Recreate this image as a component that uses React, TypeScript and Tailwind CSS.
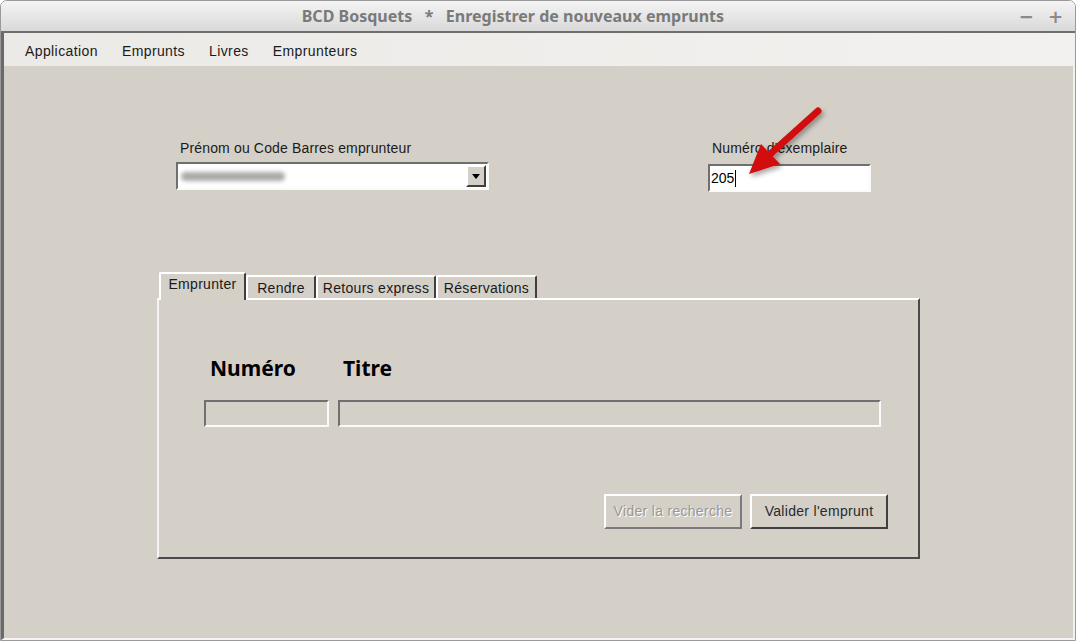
const sunken =
  "border-2 border-t-[#6f6f6f] border-l-[#6f6f6f] border-b-[#fafafa] border-r-[#fafafa]";
const raised =
  "border-2 border-t-white border-l-white border-b-[#3f3f3f] border-r-[#3f3f3f]";

const tabs = [
  { label: "Emprunter", w: "w-[87px]" },
  { label: "Rendre", w: "w-[70px]" },
  { label: "Retours express", w: "w-[120px]" },
  { label: "Réservations", w: "w-[101px]" },
];

export default function App() {
  const active = 0;

  return (
    <div className="w-[1076px] h-[641px] bg-white font-['Liberation_Sans',sans-serif] text-[#1a1a1a] overflow-hidden">
      <div className="relative w-full h-full flex flex-col rounded-t-[7px] overflow-hidden border border-[#9a9a9a]">
        {/* Title bar */}
        <div className="h-[32px] flex items-center bg-gradient-to-b from-[#f4f4f4] to-[#d9d9d9] border-b-2 border-[#6e6e6e] shrink-0">
          <div className="flex-1 text-center font-['Noto_Sans',sans-serif] font-bold text-[16px] text-[#7a7a7a] pl-[6px] whitespace-pre">
            BCD Bosquets   *   Enregistrer de nouveaux emprunts
          </div>
          <div className="flex items-center gap-[14px] pr-[12px] text-[#8a8a8a] font-['DejaVu_Sans',sans-serif] text-[18px] font-bold">
            <span>−</span>
            <span>+</span>
          </div>
        </div>

        <div className="flex-1 flex flex-col border-l-[3px] border-l-[#6a6a6a] border-r-2 border-r-[#f0f0f0] border-b-2 border-b-[#f4f4f4]">
          {/* Menu bar */}
          <div className="h-[33px] flex items-center gap-[24px] pl-[21px] pt-[3px] bg-gradient-to-r from-[#eceae7] to-[#f2f1ef] text-[14px] tracking-[0.4px]">
            <span>Application</span>
            <span>Emprunts</span>
            <span>Livres</span>
            <span>Emprunteurs</span>
          </div>

          {/* Body */}
          <div className="relative flex-1 bg-[#d4d0c8] pt-[74px]">
            <div className="flex items-start pl-[172px]">
              <div className="w-[313px] flex flex-col gap-[6px]">
                <span className="text-[14px] tracking-[0.15px] pl-[4px] leading-[16px]">Prénom ou Code Barres emprunteur</span>
                <div className={`h-[28px] bg-white flex items-center ${sunken}`}>
                  <div className="flex-1 pl-[2px]">
                    <div className="w-[104px] h-[9px] ml-[1px] rounded-full bg-[#a9a9a9] blur-[2px]" />
                  </div>
                  <div className={`w-[20px] h-[22px] mr-[1px] bg-[#d4d0c8] flex items-center justify-center ${raised}`}>
                    <svg width="8" height="5" viewBox="0 0 8 5">
                      <path d="M0 0 H8 L4 5 Z" fill="#000" />
                    </svg>
                  </div>
                </div>
              </div>
              <div className="ml-[219px] w-[163px] flex flex-col gap-[7px]">
                <span className="text-[14px] tracking-[0.15px] pl-[4px] leading-[17px]">Numéro d'exemplaire</span>
                <div className={`h-[28px] bg-white flex items-center ${sunken}`}>
                  <span className="text-[14px] pl-[1px] text-black">205</span>
                  <span className="w-[1px] h-[17px] bg-black ml-[1px]" />
                </div>
              </div>
            </div>

            {/* Tabs */}
            <div className="ml-[153px] mt-[79px] w-[763px]">
              <div className="flex items-end h-[27px] pl-[2px]">
                {tabs.map((t, i) => (
                  <div
                    key={t.label}
                    className={`${t.w} text-[14px] tracking-[0.3px] flex items-center justify-center border-l-2 border-t-2 border-r-2 border-l-white border-t-white border-r-[#3f3f3f] rounded-t-[2px] ${
                      i === active
                        ? "h-[28px] pb-[6px] relative z-10 -mb-[2px] bg-[#d4d0c8]"
                        : "h-[23px] pt-[1px]"
                    }`}
                  >
                    {t.label}
                  </div>
                ))}
              </div>
              <div className="h-[261px] flex flex-col pl-[45px] pr-[30px] pt-[55px] border-2 border-t-white border-l-[#f4f4f4] border-b-[#4a4a4a] border-r-[#4a4a4a]">
                <div className="flex font-['Noto_Sans',sans-serif] font-bold text-[21px] text-black leading-[26px]">
                  <span className="w-[139px] pl-[6px]">Numéro</span>
                  <span>Titre</span>
                </div>
                <div className="flex gap-[9px] mt-[19px] pr-[7px]">
                  <div className={`w-[125px] h-[27px] ${sunken}`} />
                  <div className={`flex-1 h-[27px] ${sunken}`} />
                </div>
                <div className="flex justify-end gap-[8px] mt-[67px]">
                  <div className={`w-[138px] h-[35px] flex items-center justify-center text-[14px] tracking-[0.3px] text-[#9a9893] [text-shadow:1px_1px_0_#fff] ${raised} border-b-[#7a7a7a] border-r-[#7a7a7a]`}>
                    Vider la recherche
                  </div>
                  <div className={`w-[138px] h-[35px] flex items-center justify-center text-[14px] tracking-[0.3px] text-[#2a2a2a] ${raised} border-b-[#1e1e1e] border-r-[#1e1e1e]`}>
                    Valider l'emprunt
                  </div>
                </div>
              </div>
            </div>

            {/* Red arrow annotation */}
            <svg className="absolute left-[738px] top-[38px] pointer-events-none" width="90" height="80" viewBox="0 0 90 80">
              <defs>
                <filter id="sh" x="-30%" y="-30%" width="160%" height="160%">
                  <feDropShadow dx="2" dy="3" stdDeviation="2.5" floodColor="#000" floodOpacity="0.35" />
                </filter>
              </defs>
              <g filter="url(#sh)">
                <line x1="76" y1="7" x2="26" y2="52" stroke="#d20a0a" strokeWidth="7" strokeLinecap="round" />
                <path d="M7 70 L19 40 L38 60 Z" fill="#d20a0a" />
              </g>
            </svg>
          </div>
        </div>
      </div>
    </div>
  );
}
